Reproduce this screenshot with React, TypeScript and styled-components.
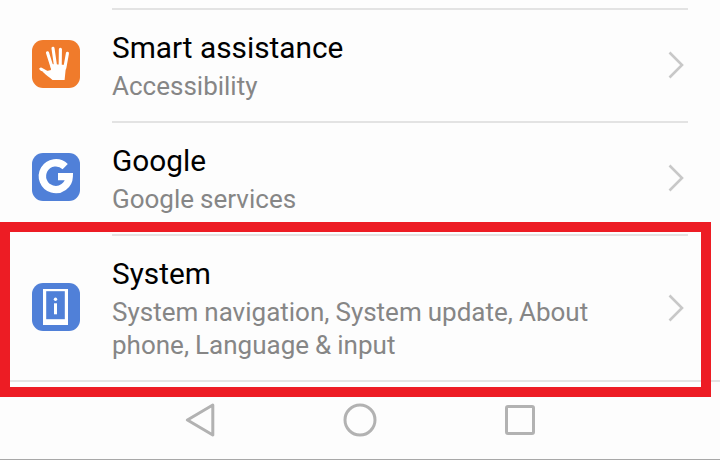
import React from 'react';
import styled, { createGlobalStyle } from 'styled-components';

const GlobalStyle = createGlobalStyle`
  html, body {
    margin: 0;
    padding: 0;
    background: #fdfdfd;
  }
  body {
    font-family: Roboto, "Liberation Sans", sans-serif;
  }
`;

interface SettingItem {
  title: string;
  subtitle: string;
  color: string;
  tall?: boolean;
  icon: React.ReactNode;
}

const HandIcon = () => (
  <svg width="48" height="48" viewBox="0 0 48 48">
    <g fill="none" stroke="#fff" strokeWidth="3.1" strokeLinecap="round">
      <path d="M15.5 12.8 L20 27" />
      <path d="M21 8.4 L23.4 25" />
      <path d="M28.4 9.2 L28.2 25" />
      <path d="M35.4 13.4 L32.8 28" />
      <path d="M9 29 L19 34.5" />
    </g>
    <path fill="#fff" d="M18.5 24 L34.2 25 L33.4 32 L32.6 40 L20.5 40 C17.5 37.5 14 35 11 32 L19 30 Z" />
  </svg>
);

const GoogleIcon = () => (
  <svg width="48" height="48" viewBox="0 0 48 48">
    <path
      fill="none"
      stroke="#fff"
      strokeWidth="7.4"
      d="M33.2 13.6 A13.4 13.4 0 1 0 37.2 23.6 L26 23.6"
    />
  </svg>
);

const SystemIcon = () => (
  <svg width="48" height="48" viewBox="0 0 48 48">
    <rect x="11" y="6" width="25" height="36" fill="#fff" />
    <rect x="14.2" y="8.2" width="18.6" height="28" fill="#5080d8" />
    <circle cx="23.5" cy="16.3" r="1.7" fill="#fff" />
    <rect x="22" y="20.3" width="3" height="11" fill="#fff" />
  </svg>
);

const items: SettingItem[] = [
  { title: 'Smart assistance', subtitle: 'Accessibility', color: '#f07b2b', icon: <HandIcon /> },
  { title: 'Google', subtitle: 'Google services', color: '#5080d8', icon: <GoogleIcon /> },
  {
    title: 'System',
    subtitle: 'System navigation, System update, About phone, Language & input',
    color: '#5080d8',
    tall: true,
    icon: <SystemIcon />,
  },
];

const App: React.FC = () => {
  return (
    <>
      <GlobalStyle />
      <StyledScreen>
        <StyledList>
          {items.map((item) => (
            <StyledRow key={item.title} $tall={item.tall}>
              <StyledIconBox $color={item.color}>{item.icon}</StyledIconBox>
              <StyledContent>
                <StyledText $tall={item.tall}>
                  <StyledTitle>{item.title}</StyledTitle>
                  <StyledSubtitle>{item.subtitle}</StyledSubtitle>
                </StyledText>
                <svg width="17" height="28" viewBox="0 0 17 28">
                  <path d="M2.5 1.5 L15 14 L2.5 26.5" fill="none" stroke="#c8c8c8" strokeWidth="2.6" />
                </svg>
              </StyledContent>
            </StyledRow>
          ))}
          <StyledEndRule />
        </StyledList>
        <StyledNavBar>
          <svg width="31" height="34" viewBox="0 0 31 34">
            <path
              d="M27.8 2 L2.4 17 L27.8 32 Z"
              fill="none"
              stroke="#b2b2b2"
              strokeWidth="3"
              strokeLinejoin="round"
            />
          </svg>
          <svg width="34" height="34" viewBox="0 0 34 34">
            <circle cx="17" cy="17" r="15" fill="none" stroke="#b2b2b2" strokeWidth="3" />
          </svg>
          <svg width="32" height="30" viewBox="0 0 32 30">
            <rect
              x="2.5"
              y="1.5"
              width="27"
              height="27"
              rx="1.5"
              fill="none"
              stroke="#b2b2b2"
              strokeWidth="3"
            />
          </svg>
        </StyledNavBar>
        <StyledHighlight />
      </StyledScreen>
    </>
  );
};

export default App;

// Style Tags
const StyledScreen = styled.div`
  position: relative;
  width: 720px;
  height: 460px;
  overflow: hidden;
  background: #fdfdfd;
`;

const StyledList = styled.div`
  display: flex;
  flex-direction: column;
  height: 397px;
  padding-top: 8px;
  box-sizing: border-box;
`;

const StyledRow = styled.div<{ $tall?: boolean }>`
  display: flex;
  align-items: center;
  height: ${(p) => (p.$tall ? '146px' : '113px')};
  padding-left: 32px;
  padding-bottom: ${(p) => (p.$tall ? '0' : '2px')};
  box-sizing: border-box;
`;

const StyledIconBox = styled.div<{ $color: string }>`
  display: flex;
  flex: none;
  width: 48px;
  height: 48px;
  border-radius: 11px;
  background: ${(p) => p.$color};
`;

const StyledContent = styled.div`
  display: flex;
  flex: 1;
  align-items: center;
  justify-content: space-between;
  align-self: stretch;
  margin: 0 32px;
  padding-right: 4px;
  border-top: 2px solid #e3e3e3;
`;

const StyledText = styled.div<{ $tall?: boolean }>`
  width: 490px;
  padding-top: ${(p) => (p.$tall ? '1px' : '3px')};
`;

const StyledTitle = styled.div`
  font-size: 29.8px;
  line-height: 38px;
  color: #000;
`;

const StyledSubtitle = styled.div`
  margin-top: 3px;
  font-size: 26px;
  line-height: 33px;
  word-spacing: -0.4px;
  color: #868686;
`;

const StyledEndRule = styled.div`
  height: 2px;
  background: #e3e3e3;
`;

const StyledNavBar = styled.div`
  display: flex;
  align-items: center;
  gap: 127px;
  height: 63px;
  padding: 0 0 16px 185px;
  border-bottom: 1px solid #a8a8a8;
  box-sizing: border-box;
`;

const StyledHighlight = styled.div`
  position: absolute;
  left: 0;
  top: 222px;
  width: 711px;
  height: 175px;
  border: 10px solid #ed1c24;
  box-sizing: border-box;
`;
